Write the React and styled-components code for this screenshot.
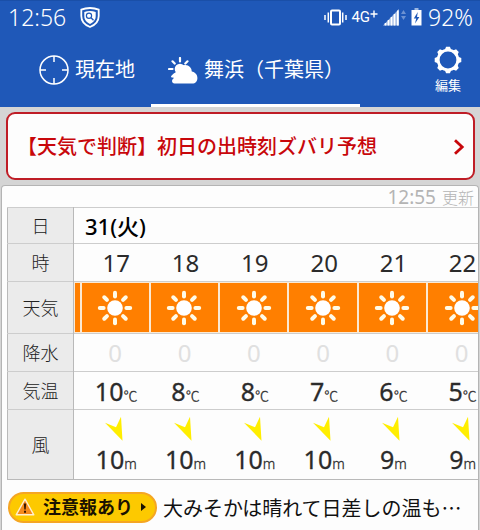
import React from 'react';
import styled, { createGlobalStyle } from 'styled-components';

const GlobalStyle = createGlobalStyle`
  *, *::before, *::after { box-sizing: border-box; }
  html { background: #d5d5d5; }
  body {
    margin: 0;
    overflow-x: hidden;
    background: #d5d5d5;
    color: #2b2b2b;
    font-family: "Noto Sans", "Noto Sans CJK JP", sans-serif;
  }
  button { margin: 0; padding: 0; border: 0; background: none; color: inherit; font: inherit; cursor: pointer; }
  a { color: inherit; text-decoration: none; }
  svg { display: block; flex: none; }
`;

const Page = styled.div`
  display: flex;
  flex-direction: column;
  min-height: 100vh;
`;

const Header = styled.header`
  background: #1f58b8;
  border-top: 1px solid #1a4fa8;
  color: #fff;
`;

const StatusBar = styled.div`
  display: flex;
  align-items: center;
  justify-content: space-between;
  height: 34px;
  padding: 0 7px 2px 8px;
  font-size: 23px;
  font-weight: 300;
  line-height: 32px;
`;

const StatusGroup = styled.div`
  display: flex;
  align-items: center;
  gap: ${(p) => p.$gap}px;
`;

const Network = styled.span`
  display: flex;
  align-items: center;
  margin-right: 1px;
  font-family: Roboto, sans-serif;
  font-size: 15px;
  font-weight: 400;
`;

const NavBar = styled.nav`
  display: flex;
  align-items: stretch;
  height: 72px;
`;

const Tab = styled.button`
  display: flex;
  align-items: center;
  gap: 6px;
  width: ${(p) => p.$width};
  padding: 1px 0 0 ${(p) => p.$inset}px;
  border-bottom: 3px solid ${(p) => (p.$active ? '#fff' : 'transparent')};
  font-size: 20px;
  line-height: 28px;
  white-space: nowrap;
`;

const EditButton = styled.button`
  display: flex;
  flex-direction: column;
  align-items: center;
  gap: 1px;
  margin-left: auto;
  padding: 11px 18px 0 0;
  font-size: 13px;
  line-height: 20px;
`;

const Banner = styled.a`
  display: flex;
  align-items: center;
  justify-content: space-between;
  min-height: 68px;
  margin: 5px 5px 5px 6px;
  padding: 1px 8px 0 9px;
  border: 2px solid #bf1d26;
  border-radius: 9px;
  background: #fdfdfd;
  color: #c8070b;
  font-size: 20px;
  font-weight: 500;
  line-height: 28px;
  white-space: nowrap;
`;

const Panel = styled.main`
  flex: 1;
  margin: 0 1px;
  padding: 0 0 0 5px;
  border: 1px solid #b4b4b4;
  border-bottom: 0;
  border-radius: 4px 4px 0 0;
  background: #fdfdfd;
`;

const Updated = styled.p`
  display: flex;
  justify-content: flex-end;
  align-items: center;
  gap: 6px;
  height: 21px;
  margin: 0;
  padding-right: 4px;
  color: #b4b4b4;
  font-size: 16px;
  font-weight: 300;
`;

const UpdatedTime = styled.time`
  font-size: 19px;
  font-weight: 400;
`;

const Scroller = styled.div`
  overflow: hidden;
`;

const Forecast = styled.table`
  width: calc(100% + 19px);
  table-layout: fixed;
  border-collapse: collapse;
  border: 1px solid #b9b9b9;
  text-align: center;
`;

const Row = styled.tr`
  height: ${(p) => p.$height}px;
  border-top: 1px solid #cdcdcd;
`;

const HeadCol = styled.col`width: 66px;`;
const PastCol = styled.col`width: 7px;`;

const RowLabel = styled.th`
  padding: 0;
  border-right: 1px solid #b9b9b9;
  background: #ebebeb;
  color: #222;
  font-size: 18px;
  font-weight: 300;
  line-height: 24px;
`;

const DateCell = styled.td`
  padding: 0 0 0 11px;
  color: #000;
  font-size: 22px;
  font-weight: 500;
  line-height: 28px;
  text-align: left;
`;

const Cell = styled.td`
  padding: 0 0 0 ${(p) => (p.$shift ? 2 : 0)}px;
  color: ${(p) => (p.$faint ? '#e0e0e0' : '#2b2b2b')};
  font-size: 24px;
  line-height: 28px;
  white-space: nowrap;
`;

const SkyCell = styled.td`
  padding: 1px;
  background: #fbe9d3;
`;

const SkyTile = styled.div`
  display: flex;
  align-items: center;
  justify-content: center;
  height: 49px;
  background: #ff7f00;
`;

const Reading = styled.div`
  display: flex;
  align-items: baseline;
  justify-content: center;
  font-size: 25px;
  font-weight: 400;
  line-height: 30px;
  -webkit-text-stroke: 0.3px currentColor;
`;

const Unit = styled.span`
  font-family: ${(p) => (p.$cjk ? '"Noto Sans CJK JP"' : '"Noto Sans"')}, sans-serif;
  font-size: 14px;
  font-weight: 300;
  line-height: 14px;
`;

const WindMark = styled.div`
  display: flex;
  justify-content: center;
  padding-bottom: 3px;
`;

const Footer = styled.div`
  display: flex;
  align-items: center;
  gap: 6px;
  padding: 12px 14px 8px 1px;
`;

const AlertBadge = styled.a`
  display: flex;
  flex: none;
  align-items: center;
  gap: 8px;
  height: 31px;
  padding: 0 9px 2px 5px;
  border: 2px solid #f5a623;
  border-radius: 16px;
  background: #fdc900;
  color: #1a1200;
  font-size: 18px;
  font-weight: 700;
  line-height: 24px;
  white-space: nowrap;
`;

const Headline = styled.a`
  min-width: 0;
  overflow: hidden;
  color: #111;
  font-family: "Noto Sans CJK JP", sans-serif;
  font-size: 20px;
  line-height: 30px;
  white-space: nowrap;
`;

const ShieldIcon = () => (
  <svg width="20" height="21" viewBox="0 0 20 21" fill="none" aria-hidden="true">
    <path d="M10 1C7 1 4 1.500 1.300 2.600V9c0 5.500 3.500 9 8.700 11 5.200-2 8.700-5.500 8.700-11V2.600C16 1.500 13 1 10 1Z" stroke="#fff" strokeWidth="1.800" />
    <path d="M10 4C8 4 6 4.300 4.300 4.900V9c0 4 2.200 6.300 5.700 8 3.500-1.700 5.700-4 5.700-8V4.900C14 4.300 12 4 10 4Z" fill="#fff" />
    <circle cx="9" cy="8.800" r="2.600" stroke="#1f58b8" strokeWidth="1.200" />
    <path d="M11 10.800l2.500 2.500" stroke="#1f58b8" strokeWidth="1.400" />
  </svg>
);

const VibrateIcon = () => (
  <svg width="23" height="17" viewBox="0 0 23 17" aria-hidden="true">
    <rect x="7" y="1.500" width="9" height="14" rx="1" fill="none" stroke="#fff" strokeWidth="2" />
    <path d="M4.300 3.500v10M1 6v5M18.700 3.500v10M22 6v5" stroke="#fff" strokeWidth="1.500" />
  </svg>
);

const PlusIcon = () => (
  <svg width="8" height="14" viewBox="0 0 8 14" aria-hidden="true">
    <path d="M4 .5v7M.5 4h7" stroke="#fff" strokeWidth="1.400" />
  </svg>
);

const SignalIcon = () => (
  <svg width="24" height="17" viewBox="0 0 24 17" aria-hidden="true">
    <path d="M0 16.500 16 0v16.500Z" fill="#a9c0e6" />
    <path d="M2.500 14v2.500M5.500 11v5.500M8.500 8v8.500M11.500 5v11.500M14.800 1.500v15" stroke="#fff" strokeWidth="1.600" />
    <path d="m20.500 1 2.500 4h-5ZM20.500 11l2.500-4h-5Z" fill="#6d92d2" />
  </svg>
);

const BatteryIcon = () => (
  <svg width="11" height="18" viewBox="0 0 11 18" aria-hidden="true">
    <path d="M3.500 0h4v2h-4z" fill="#9db8e3" />
    <path d="M.5 2h10v15.500H.5z" fill="#fff" />
    <path d="M6.800 4 2.800 10.500h2.400L4 15.500 8.400 9H6Z" fill="#1f58b8" />
  </svg>
);

const TargetIcon = () => (
  <svg width="30" height="30" viewBox="0 0 30 30" fill="none" stroke="#fff" strokeWidth="1.500" aria-hidden="true">
    <circle cx="15" cy="15" r="14" />
    <path d="M15 1v6M15 23v6M1 15h6M23 15h6" />
  </svg>
);

const CloudSunIcon = () => (
  <svg width="30" height="27" viewBox="0 0 30 27" fill="#fff" aria-hidden="true">
    <path d="M12 1v3.500M4.500 4.300 6.700 6.500M19.500 4.300 17.300 6.500M1 12h3.500M4.200 19.500l2-2" stroke="#fff" strokeWidth="2.200" strokeLinecap="round" />
    <circle cx="12" cy="12" r="5.300" />
    <path d="M6.500 26.500a2.500 2.500 0 0 1-1-4.800A5.500 5.500 0 0 1 8 15l4.500-5.500A6.500 6.500 0 0 1 17.500 8a6.500 6.500 0 0 1 6.300 6.500c3.200.6 5.600 3 5.600 6.400 0 3.300-2 5.600-5.100 5.600Z" />
  </svg>
);

const GearIcon = () => (
  <svg width="28" height="28" viewBox="0 0 28 28" fill="none" stroke="#fff" aria-hidden="true">
    <circle cx="14" cy="14" r="9.800" strokeWidth="2.800" />
    {[0, 45, 90, 135, 180, 225, 270, 315].map((a) => (
      <path key={a} d="m10.600 4.300 1.500-3.600h3.800l1.500 3.600Z" fill="#fff" stroke="none" transform={`rotate(${a} 14 14)`} />
    ))}
  </svg>
);

const ChevronIcon = () => (
  <svg width="12" height="18" viewBox="0 0 12 18" fill="none" aria-hidden="true">
    <path d="m2 2.200 7.200 6.800L2 15.800" stroke="#c8070b" strokeWidth="2.800" />
  </svg>
);

const SunIcon = () => (
  <svg width="36" height="36" viewBox="0 0 36 36" role="img" aria-label="晴れ">
    <circle cx="18" cy="18" r="7.800" fill="#fff" />
    {[0, 45, 90, 135, 180, 225, 270, 315].map((a) => (
      <path key={a} d="M18 2.800v3.800" stroke="#fffbe8" strokeWidth="4" strokeLinecap="round" transform={`rotate(${a} 18 18)`} />
    ))}
  </svg>
);

const WindIcon = () => (
  <svg width="24" height="25" viewBox="0 0 24 25" aria-hidden="true">
    <path d="m1 6.700 11 4.600 5-10.600 1.500 24Z" fill="#ffee00" />
  </svg>
);

const WarningIcon = () => (
  <svg width="20" height="18" viewBox="0 0 20 18" aria-hidden="true">
    <path d="M10 1.200 18.800 16.800H1.200Z" fill="#f58a1c" stroke="#fff0cf" strokeWidth="1.400" strokeLinejoin="round" />
    <path d="M8.800 5.500h2.400l-.5 6H9.300ZM9 12.700h2v2H9Z" fill="#3a1a00" />
  </svg>
);

const MoreIcon = () => (
  <svg width="5" height="8" viewBox="0 0 5 8" aria-hidden="true">
    <path d="M0 0 5 4 0 8Z" fill="#1a1200" />
  </svg>
);

const hours = [
  { hour: 17, rain: 0, temp: 10, wind: 10 },
  { hour: 18, rain: 0, temp: 8, wind: 10 },
  { hour: 19, rain: 0, temp: 8, wind: 10 },
  { hour: 20, rain: 0, temp: 7, wind: 10 },
  { hour: 21, rain: 0, temp: 6, wind: 9 },
  { hour: 22, rain: 0, temp: 5, wind: 9 },
];

function ForecastTable() {
  return (
    <Scroller>
      <Forecast>
        <colgroup>
          <HeadCol />
          <PastCol />
          {hours.map((h) => <col key={h.hour} />)}
        </colgroup>
        <tbody>
          <Row $height={36}>
            <RowLabel scope="row">日</RowLabel>
            <DateCell colSpan={7}>31(火)</DateCell>
          </Row>
          <Row $height={38}>
            <RowLabel scope="row">時</RowLabel>
            <td />
            {hours.map((h) => <Cell key={h.hour} $shift>{h.hour}</Cell>)}
          </Row>
          <Row $height={52}>
            <RowLabel scope="row">天気</RowLabel>
            <SkyCell><SkyTile /></SkyCell>
            {hours.map((h) => <SkyCell key={h.hour}><SkyTile><SunIcon /></SkyTile></SkyCell>)}
          </Row>
          <Row $height={38}>
            <RowLabel scope="row">降水</RowLabel>
            <td />
            {hours.map((h) => <Cell key={h.hour} $faint>{h.rain}</Cell>)}
          </Row>
          <Row $height={38}>
            <RowLabel scope="row">気温</RowLabel>
            <td />
            {hours.map((h) => (
              <Cell key={h.hour} $shift><Reading>{h.temp}<Unit $cjk>℃</Unit></Reading></Cell>
            ))}
          </Row>
          <Row $height={70}>
            <RowLabel scope="row">風</RowLabel>
            <td />
            {hours.map((h) => (
              <Cell key={h.hour} $shift>
                <WindMark><WindIcon /></WindMark>
                <Reading>{h.wind}<Unit>m</Unit></Reading>
              </Cell>
            ))}
          </Row>
        </tbody>
      </Forecast>
    </Scroller>
  );
}

export default function App() {
  return (
    <Page>
      <GlobalStyle />
      <Header>
        <StatusBar>
          <StatusGroup $gap={14}>
            <span>12:56</span>
            <ShieldIcon />
          </StatusGroup>
          <StatusGroup $gap={4}>
            <VibrateIcon />
            <Network aria-label="4G+">4G<PlusIcon /></Network>
            <SignalIcon />
            <StatusGroup $gap={6}>
              <BatteryIcon />
              <span>92%</span>
            </StatusGroup>
          </StatusGroup>
        </StatusBar>
        <NavBar>
          <Tab type="button" $width="151px" $inset={39}><TargetIcon />現在地</Tab>
          <Tab type="button" $width="209px" $inset={17} $active><CloudSunIcon />舞浜（千葉県）</Tab>
          <EditButton type="button"><GearIcon />編集</EditButton>
        </NavBar>
      </Header>
      <Banner href="#sunrise">
        【天気で判断】初日の出時刻ズバリ予想
        <ChevronIcon />
      </Banner>
      <Panel>
        <Updated><UpdatedTime>12:55</UpdatedTime>更新</Updated>
        <ForecastTable />
        <Footer>
          <AlertBadge href="#alerts"><WarningIcon />注意報あり<MoreIcon /></AlertBadge>
          <Headline href="#news">大みそかは晴れて日差しの温も…</Headline>
        </Footer>
      </Panel>
    </Page>
  );
}
